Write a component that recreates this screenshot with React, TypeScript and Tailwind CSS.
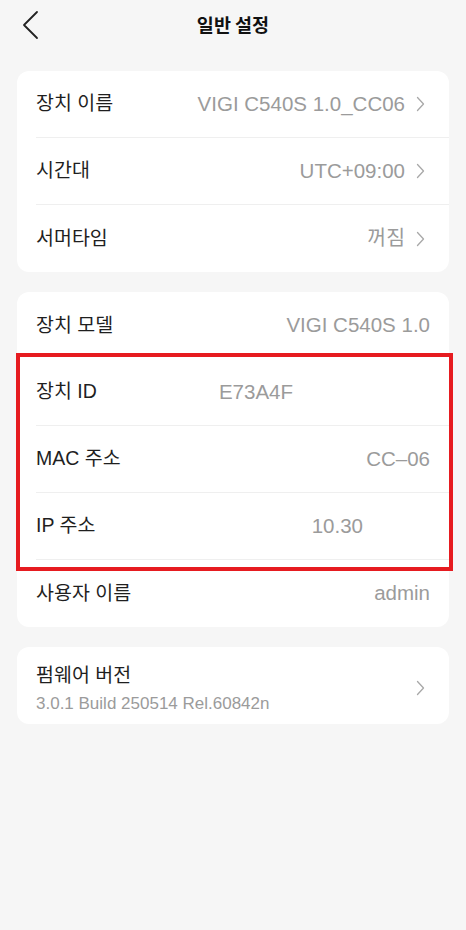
import React from 'react';

type Row = {
  label: string;
  value: string;
  chevron?: boolean;
  divider?: boolean;
  valueClass?: string;
};

const Chevron = () => (
  <svg width="9" height="16" viewBox="0 0 9 16" className="ml-[11px] shrink-0">
    <path d="M1.5 1.5 L7.5 8 L1.5 14.5" fill="none" stroke="#a8a8a8" strokeWidth="1.3" strokeLinecap="round" strokeLinejoin="round" />
  </svg>
);

const SettingRow = ({ label, value, chevron, divider = true, valueClass = '' }: Row) => (
  <div
    className={`flex items-center h-[67px] ${chevron ? 'pr-[24px]' : 'pr-[19px]'} ${
      divider ? 'border-b border-[#efefef]' : ''
    }`}
  >
    <span className="text-[19.5px] text-[#1f1f1f] leading-none">{label}</span>
    <span className={`flex-1 text-right text-[20.5px] text-[#9b9b9b] leading-none ${valueClass}`}>{value}</span>
    {chevron && <Chevron />}
  </div>
);

export default function App() {
  const general: Row[] = [
    { label: '장치 이름', value: 'VIGI C540S 1.0_CC06', chevron: true },
    { label: '시간대', value: 'UTC+09:00', chevron: true },
    { label: '서머타임', value: '꺼짐', chevron: true, divider: false },
  ];

  const info: Row[] = [
    { label: '장치 모델', value: 'VIGI C540S 1.0', divider: false },
    { label: '장치 ID', value: 'E73A4F', valueClass: 'pr-[137px]' },
    { label: 'MAC 주소', value: 'CC–06' },
    { label: 'IP 주소', value: '10.30', valueClass: 'pr-[67px]' },
    { label: '사용자 이름', value: 'admin', divider: false },
  ];

  return (
    <div className="w-[466px] min-h-[930px] bg-[#f6f6f6] font-['Liberation_Sans','Noto_Sans_CJK_KR',sans-serif]">
      {/* Header */}
      <div className="grid grid-cols-[1fr_auto_1fr] items-center h-[50px]">
        <div className="pl-[22px] flex items-center">
          <svg width="18" height="30" viewBox="0 0 18 30">
            <path d="M15 2 L2 15 L15 28" fill="none" stroke="#222" strokeWidth="1.8" strokeLinecap="round" strokeLinejoin="round" />
          </svg>
        </div>
        <h1 className="text-[18.5px] font-bold text-[#111] font-['Noto_Sans_CJK_KR',sans-serif]">일반 설정</h1>
        <div />
      </div>

      <div className="px-[17px] pt-[21px] flex flex-col gap-[20px]">
        <div className="bg-white rounded-[12px] pl-[19px]">
          {general.map((r) => (
            <SettingRow key={r.label} {...r} />
          ))}
        </div>

        <div className="relative bg-white rounded-[12px] pl-[19px]">
          {info.map((r) => (
            <SettingRow key={r.label} {...r} />
          ))}
          {/* highlight frame */}
          <div className="absolute left-[-1px] top-[61px] w-[437px] h-[218px] border-[4px] border-[#e61b20] pointer-events-none" />
        </div>

        <div className="bg-white rounded-[12px] pl-[19px] pr-[24px] pt-[14px] pb-[9px] flex items-center">
          <div className="flex-1 flex flex-col">
            <span className="text-[19.5px] leading-[28px] text-[#1f1f1f]">펌웨어 버전</span>
            <span className="text-[17px] leading-[22px] mt-[4px] text-[#9b9b9b]">3.0.1 Build 250514 Rel.60842n</span>
          </div>
          <Chevron />
        </div>
      </div>
    </div>
  );
}
